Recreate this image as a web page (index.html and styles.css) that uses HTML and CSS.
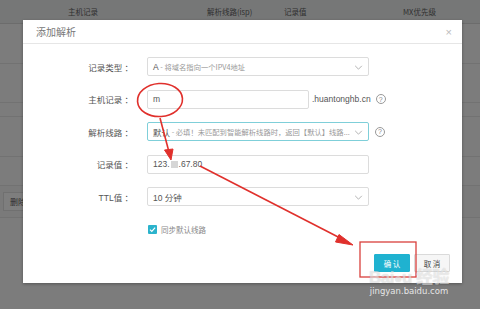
FILE: index.html
```html
<!DOCTYPE html>
<html lang="zh-CN">
<head>
  <meta charset="UTF-8" />
  <meta name="viewport" content="width=device-width, initial-scale=1.0" />
  <title>添加解析</title>
  <link rel="stylesheet" href="styles.css">
</head>
<body>
<div class="page">
  <div class="table__head">
    <span></span>
    <span>主机记录</span>
    <span>解析线路(isp)</span>
    <span>记录值</span>
    <span>MX优先级</span>
  </div>
  <div class="table__row" style="height:40px"></div>
  <div class="table__row" style="height:39px"></div>
  <div class="table__row" style="height:14px"></div>
  <div class="table__row" style="height:40px"></div>
  <div class="table__row" style="height:29px"></div>
  <div class="table__row table__row--foot" style="height:32px">
    <span class="btn-del">删除</span>
  </div>
</div>

<div class="modal">
  <div class="modal__head">
    <span class="modal__title">添加解析</span>
    <span class="modal__close">×</span>
  </div>
  <div class="modal__body">
    <div class="form__unit">
      <label class="form__title">记录类型 ：</label>
      <div class="form__main">
        <div class="field field--select">
          <span class="field__main">A</span><span class="field__sub">&nbsp;- 将域名指向一个IPV4地址</span>
          <svg class="chevron" viewBox="0 0 10 6"><path d="M1 1 L5 5 L9 1" /></svg>
        </div>
      </div>
    </div>
    <div class="form__unit">
      <label class="form__title">主机记录 ：</label>
      <div class="form__main">
        <div class="field field--short">
          <span class="field__main">m</span>
        </div>
        <span class="suffix">.huantonghb.cn</span>
        <span class="help">?</span>
      </div>
    </div>
    <div class="form__unit">
      <label class="form__title">解析线路 ：</label>
      <div class="form__main">
        <div class="field field--select field--focus">
          <span class="field__main">默认</span><span class="field__sub">&nbsp;- 必填！未匹配到智能解析线路时，返回【默认】线路...</span>
          <svg class="chevron" viewBox="0 0 10 6"><path d="M1 1 L5 5 L9 1" /></svg>
        </div>
        <span class="help">?</span>
      </div>
    </div>
    <div class="form__unit">
      <label class="form__title">记录值 ：</label>
      <div class="form__main">
        <div class="field">
          <span class="field__main">123.<i class="blur"></i>.67.80</span>
        </div>
      </div>
    </div>
    <div class="form__unit">
      <label class="form__title">TTL值 ：</label>
      <div class="form__main">
        <div class="field field--select">
          <span class="field__main">10 分钟</span>
          <svg class="chevron" viewBox="0 0 10 6"><path d="M1 1 L5 5 L9 1" /></svg>
        </div>
      </div>
    </div>
    <div class="form__unit">
      <span></span>
      <div class="form__main">
        <span class="checkbox">
          <svg viewBox="0 0 10 10"><path d="M2.2 5.2 L4.2 7.1 L7.9 3" /></svg>
        </span>
        <span class="check-label">同步默认线路</span>
      </div>
    </div>
  </div>
  <div class="modal__foot">
    <button class="btn btn--ok">确 认</button>
    <button class="btn btn--cancel">取 消</button>
  </div>
</div>

<svg class="marks" viewBox="0 0 480 309">
  <ellipse cx="160" cy="100" rx="22.5" ry="16.5" transform="rotate(-4 160 100)" />
  <path d="M160 118 L169 152" />
  <path class="head" d="M164.5 150 L173 149 L171 160 Z" />
  <path d="M200 166 L344 240" />
  <path class="head" d="M339 234.5 L353 245 L335.5 242 Z" />
  <rect x="360" y="242" width="56" height="35" />
</svg>

<div class="watermark">
  <div class="watermark__logo">Bai<span class="paw">●</span>u 经验</div>
  <div class="watermark__url">jingyan.baidu.com</div>
</div>
</body>
</html>
```

FILE: styles.css
```css
* {
  box-sizing: border-box;
}
html, body {
  margin: 0;
  height: 100%;
}
body {
  width: 480px;
  height: 309px;
  overflow: hidden;
  position: relative;
  background: #7c7c7c;
  font-family: "Liberation Sans", "Noto Sans CJK SC", sans-serif;
  color: #555;
}
.table__head {
  display: grid;
  grid-template-columns: 68px 139px 77px 119px 1fr;
  height: 24px;
  align-items: center;
  background: #767777;
  border-bottom: 1px solid #6c6c6c;
  font-size: 7.5px;
  color: #2f2f2f;
  font-family: "Noto Sans CJK SC", sans-serif;
}
.table__row {
  border-bottom: 1px solid #727272;
  display: flex;
  align-items: center;
}
.table__row--foot {
  background: #7a7a7a;
}
.btn-del {
  margin-left: 3px;
  padding: 3px 6px;
  border: 1px solid #707070;
  background: #7e7e7e;
  color: #2c2c2c;
  font-size: 8px;
  font-family: "Noto Sans CJK SC", sans-serif;
}

/* modal */
.modal {
  position: absolute;
  left: 23px;
  top: 20px;
  width: 439px;
  height: 263px;
  background: #fff;
  box-shadow: 0 1px 3px rgba(0, 0, 0, 0.3);
  display: flex;
  flex-direction: column;
}
.modal__head {
  height: 24px;
  border-bottom: 1px solid #e6e6e6;
  display: flex;
  align-items: center;
  justify-content: space-between;
  padding: 0 10px 0 13px;
}
.modal__title {
  font-size: 10px;
  color: #777;
  font-family: "Noto Sans CJK SC", sans-serif;
}
.modal__close {
  font-size: 11px;
  color: #bbb;
}
.modal__body {
  padding-top: 13px;
  display: flex;
  flex-direction: column;
  gap: 13.5px;
}
.form__unit {
  display: grid;
  grid-template-columns: 110px 1fr;
  column-gap: 14px;
  align-items: center;
  height: 19px;
}
.form__title {
  text-align: right;
  font-size: 8.5px;
  color: #555;
  font-family: "Liberation Sans", "Noto Sans CJK SC", sans-serif;
}
.form__main {
  display: flex;
  align-items: center;
  height: 19px;
}
.field {
  width: 222px;
  height: 19px;
  border: 1px solid #dcdcdc;
  border-radius: 2px;
  display: flex;
  align-items: center;
  padding: 0 5px;
  position: relative;
  white-space: nowrap;
  overflow: hidden;
}
.field--short {
  width: 162px;
}
.field--focus {
  border-color: #7fcfd9;
}
.field__main {
  font-size: 8.5px;
  color: #555;
  display: flex;
  align-items: center;
}
.field__sub {
  font-size: 7.3px;
  color: #999;
  font-family: "Noto Sans CJK SC", sans-serif;
}
.blur {
  display: inline-block;
  width: 7px;
  height: 7px;
  background: #d6d6d6;
  margin: 0 1px;
}
.chevron {
  position: absolute;
  right: 5px;
  top: 7px;
  width: 9px;
  height: 5px;
  fill: none;
  stroke: #999;
  stroke-width: 0.9;
}
.suffix {
  margin-left: 3px;
  font-size: 8.5px;
  color: #555;
}
.help {
  margin-left: 5px;
  width: 10px;
  height: 10px;
  border: 1px solid #999;
  border-radius: 50%;
  font-size: 7px;
  color: #888;
  display: flex;
  align-items: center;
  justify-content: center;
}
.form__main .field + .help {
  margin-left: 6px;
}
.checkbox {
  width: 9px;
  height: 9px;
  margin-left: 1px;
  background: #2bb3cc;
  border-radius: 1px;
  display: flex;
}
.checkbox svg {
  width: 9px;
  height: 9px;
  fill: none;
  stroke: #fff;
  stroke-width: 1.3;
}
.check-label {
  margin-left: 4px;
  font-size: 7.5px;
  color: #888;
  font-family: "Noto Sans CJK SC", sans-serif;
}
.modal__foot {
  margin-top: auto;
  display: flex;
  justify-content: flex-end;
  gap: 4px;
  padding: 0 12px 11px 0;
}
.btn {
  width: 36px;
  height: 18px;
  border-radius: 1px;
  font-size: 7.5px;
  font-family: "Noto Sans CJK SC", sans-serif;
  padding: 0;
}
.btn--ok {
  background: #1fb2d0;
  border: 1px solid #1fb2d0;
  color: #fff;
}
.btn--cancel {
  background: #f6f6f6;
  border: 1px solid #dadada;
  color: #444;
}

/* annotations over the screenshot */
.marks {
  position: absolute;
  left: 0;
  top: 0;
  width: 480px;
  height: 309px;
  fill: none;
  stroke: #e0302c;
  stroke-width: 1.6;
}
.marks rect {
  stroke: #d9403c;
  stroke-width: 1.3;
}
.marks .head {
  fill: #e0302c;
  stroke-width: 1;
}
.watermark {
  position: absolute;
  left: 369px;
  top: 270px;
  text-align: center;
}
.watermark__logo {
  font-size: 17px;
  font-weight: bold;
  line-height: 16px;
  color: rgba(255, 255, 255, 0.55);
  text-shadow: 0 0 1px rgba(0, 0, 0, 0.2);
  font-family: "Liberation Sans", "Noto Sans CJK SC", sans-serif;
  letter-spacing: -0.5px;
}
.paw {
  font-size: 14px;
}
.watermark__url {
  margin-top: 0;
  font-size: 8.5px;
  color: #e6e6e6;
  font-family: "DejaVu Sans", sans-serif;
}
```
